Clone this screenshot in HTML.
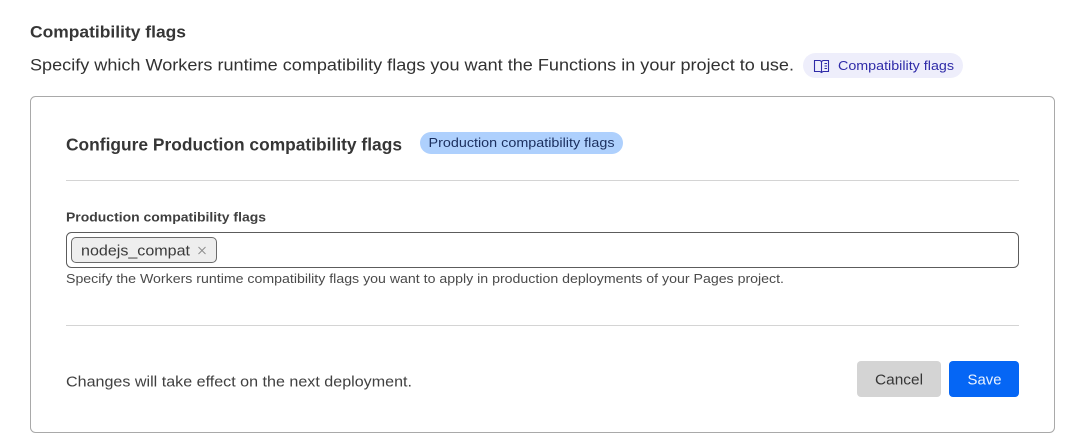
<!DOCTYPE html>
<html>
<head>
<meta charset="utf-8">
<style>
html,body{margin:0;padding:0;background:#fff;width:1086px;height:446px;overflow:hidden}
svg{position:absolute;left:0;top:0;display:block}
text{font-family:"Liberation Sans",Arial,sans-serif}
</style>
</head>
<body>
<svg width="1086" height="446" viewBox="0 0 1086 446" xmlns="http://www.w3.org/2000/svg">
<rect width="1086" height="446" fill="#fff"/>
<text x="30" y="37.500" font-size="16.500" font-weight="700" fill="#363636" textLength="156" lengthAdjust="spacingAndGlyphs">Compatibility flags</text>
<text x="30" y="70.500" font-size="16.500" fill="#313131" textLength="764" lengthAdjust="spacingAndGlyphs">Specify which Workers runtime compatibility flags you want the Functions in your project to use.</text>

<rect x="803" y="53" width="160" height="25" rx="12.500" fill="#eeeefb"/>
<g fill="none" stroke="#2f2ba8" stroke-width="1.100">
<path d="M814.500 60.500h5.500l1.500 1 1.500-1h5.500v11h-5.500l-1.500 1-1.500-1h-5.500z"/>
<path d="M821.500 61.500v11"/>
<path d="M824.500 63.500h2.500M824.500 66h2.500M824.500 68.500h2.500"/>
</g>
<text x="838" y="70" font-size="12.800" fill="#2f2ba8" textLength="116" lengthAdjust="spacingAndGlyphs">Compatibility flags</text>

<rect x="30.500" y="96.500" width="1024" height="336" rx="5" fill="#fff" stroke="#a9a9a9"/>

<text x="66" y="150.500" font-size="17.500" font-weight="700" fill="#363636" textLength="336" lengthAdjust="spacingAndGlyphs">Configure Production compatibility flags</text>
<rect x="420" y="132" width="203" height="22" rx="11" fill="#aed0fd"/>
<text x="428.500" y="147" font-size="12.800" fill="#1b2f5e" textLength="186" lengthAdjust="spacingAndGlyphs">Production compatibility flags</text>

<rect x="66" y="180" width="953" height="1" fill="#d4d4d4"/>

<text x="66" y="221.500" font-size="12.800" font-weight="700" fill="#3f3f3f" textLength="200" lengthAdjust="spacingAndGlyphs">Production compatibility flags</text>

<rect x="66.500" y="232.500" width="952" height="35" rx="5" fill="#fff" stroke="#5c5c5c"/>
<rect x="71.500" y="237.500" width="145" height="25" rx="4.500" fill="#eeeeee" stroke="#6b6b6b"/>
<text x="81" y="255.500" font-size="14.800" fill="#3a3a3a" textLength="109" lengthAdjust="spacingAndGlyphs">nodejs_compat</text>
<path d="M198.500 247l7 7M205.500 247l-7 7" stroke="#8a8a8a" stroke-width="0.900" fill="none"/>

<text x="66" y="283" font-size="12.800" fill="#4a4a4a" textLength="718" lengthAdjust="spacingAndGlyphs">Specify the Workers runtime compatibility flags you want to apply in production deployments of your Pages project.</text>

<rect x="66" y="325" width="953" height="1" fill="#d4d4d4"/>

<text x="66" y="386.500" font-size="14.500" fill="#404040" textLength="346" lengthAdjust="spacingAndGlyphs">Changes will take effect on the next deployment.</text>

<rect x="857" y="361" width="84" height="36" rx="4" fill="#d4d4d4"/>
<text x="875" y="384.500" font-size="14.800" fill="#363636" textLength="48" lengthAdjust="spacingAndGlyphs">Cancel</text>
<rect x="949" y="361" width="70" height="36" rx="4" fill="#0566f5"/>
<text x="967.500" y="384.500" font-size="14.800" fill="#eaf2ff" textLength="34" lengthAdjust="spacingAndGlyphs">Save</text>
</svg>
</body>
</html>
